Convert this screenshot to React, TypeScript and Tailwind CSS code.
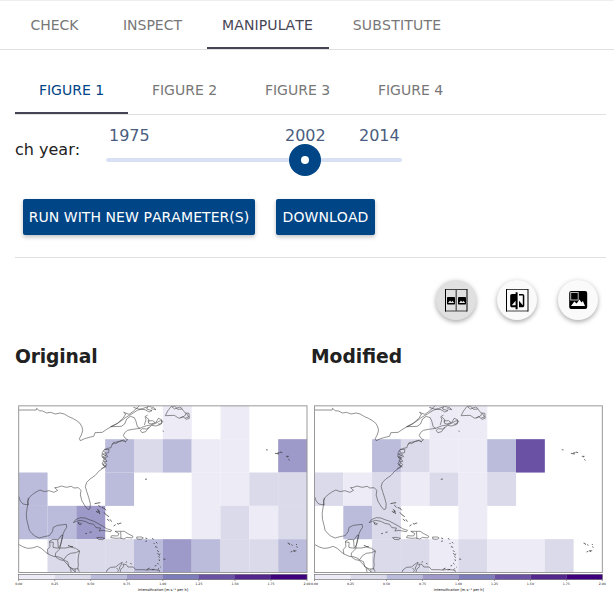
import React from "react";

const SHADES = ["#ffffff", "#edebf6", "#dadaea", "#bbbcdc", "#9d99c8", "#7f7cba", "#6a51a3", "#54278f", "#3f007d"];

const ORIGINAL = [
  [0, 0, 0, 0, 0, 1, 0, 1, 0, 0],
  [0, 0, 0, 3, 2, 3, 1, 1, 0, 4],
  [3, 0, 0, 3, 0, 0, 1, 1, 2, 2],
  [3, 3, 4, 0, 0, 0, 1, 2, 1, 2],
  [0, 2, 2, 2, 3, 4, 3, 2, 2, 3],
];

const MODIFIED = [
  [0, 0, 0, 0, 1, 1, 0, 0, 0, 0],
  [0, 0, 3, 2, 1, 1, 3, 6, 0, 0],
  [2, 1, 2, 1, 2, 1, 2, 0, 0, 0],
  [0, 3, 2, 0, 0, 1, 0, 0, 0, 0],
  [0, 0, 2, 2, 1, 2, 1, 1, 2, 0],
];

const COAST = [
  // Great Lakes border and St Lawrence
  "M26 36H79L80 31L88 38L98 39L110 45L122 43L136 48L150 45L163 48L176 56L188 61L200 68L210 76L216 87L218 98L214 111L208 122L211 128L224 122L238 118L251 115L255 104L277 103L290 94L302 87L318 79L333 69L346 59L365 48L382 37L400 31L414 26",
  "M302 86L334 85L344 78L350 63L361 55L373 59L378 70L382 86L390 91",
  "M302 86L322 76L340 60L347 48L341 43L357 49L371 39L384 27L389 23",
  // Atlantic seaboard and Florida
  "M390 91L368 94L353 97L344 104L340 113L347 122L353 125L346 131L341 126L329 130L316 133L306 140L303 149L293 151L282 156L277 164L276 175L283 185L276 198L286 203L277 212L266 220L256 232L240 243L230 253L226 266L230 280L236 298L241 317L240 332L234 335L225 324L216 309L211 291L213 277L205 269L192 270L184 265L169 268L154 264L143 268L134 269L143 277L132 283L117 278L103 281L90 276L78 282L68 289L58 298L53 309L55 321",
  "M282 154L297 154L296 164L287 166L293 176L283 179L291 190L282 191L290 199L284 209L274 211M280 158L286 164L278 169L288 172L277 177L286 181L279 188M284 194L279 202L290 207",
  "M306 139L311 133L317 137L329 130L338 128L348 132",
  // Maritime provinces and Newfoundland
  "M390 91L398 87L410 83L423 81L437 76L451 68L459 70L450 80L437 84L425 82L415 91L407 101L396 104L391 97L397 92L410 93L418 87M408 57L417 65L415 75L423 78L436 74L428 68L413 69M403 81L408 65L405 56L413 51M437 75L445 61L455 65L454 78L444 78",
  "M370 28L386 33L405 35L417 42L426 38L410 33L414 25L430 28L438 35L423 32",
  "M466 53L473 39L483 26L494 24L503 34L516 33L526 45L537 46L538 61L529 64L519 56L507 61L499 56L493 52L466 53M486 27L494 33L509 27L517 32M511 60L524 54L529 45M530 47L536 57L526 60",
  // Gulf of Mexico, Yucatan and Central America
  "M26 295L31 309L39 318L55 321M55 300L53 320L51 333L49 347L50 364L54 380L58 397L66 407L76 415L88 420L102 416L118 413L127 401L130 388L143 382L169 379L170 388L163 399L157 414L153 434L150 450L167 450L181 447L197 451L209 459L206 470L204 486L205 502L203 511L208 521",
  "M26 439L38 446L53 451L67 450L82 445L94 451L104 460L114 468L130 475L143 476L158 482L163 490L171 498L180 508L189 516L197 523M114 468L112 455L120 446L119 429L129 424L143 425L145 450L150 452L137 465L136 475M144 426L154 412L159 412L153 437L147 450M137 477L149 485L160 487L170 473L181 466L197 464L208 459M163 487L173 491L177 507L191 513L205 512M181 511L184 523M195 513L196 523M119 432L130 433L129 448L144 451",
  // Caribbean islands
  "M190 374L197 365L211 359L225 360L237 365L250 369L265 377L279 385L290 392L305 397L302 401L278 397L267 399L272 390L258 389L251 379L237 376L225 370L210 367L199 370Z",
  "M206 374L215 377L211 381L206 378ZM260 419L271 418L284 421L278 425L265 424ZM315 400L330 400L343 400L354 407L369 415L366 420L350 418L342 423L330 420L319 421L302 419L305 413L323 414L327 407ZM332 401L333 422M380 417L395 417L400 420L393 424L381 423Z",
  "M289 523L291 516L302 508L317 507L331 496L337 493L332 503L328 510L332 518L330 523M332 514L341 506L339 498L349 500L354 507L370 507L377 515L398 515L412 516L425 514L448 517L448 523M320 510L326 517L322 523",
];

const SPECKS = [
  "M254 317L264 315L271 314M265 321L272 328M261 334L268 339L263 345M266 338L269 348M281 329L288 337M282 343L289 351M289 351L297 356M291 363L298 369M300 364L305 371M326 377L334 375M311 384L317 380M321 376L326 379M258 340L264 343M276 327L280 332",
  "M226 407L231 406M239 403L245 402M174 443L179 443M179 445L189 446M203 373L207 376",
  "M406 420L412 422M406 430L411 429M426 421L431 424M431 435L434 438M438 432L442 436M435 446L442 448M442 457L446 462M442 466L447 470M446 475L449 479M447 484L449 489M442 495L446 499M434 504L439 502M443 515L447 511M410 515L419 510M425 516L433 514M347 493L351 491M361 496L365 498M450 470L447 472",
  "M405 244L411 243M458 99L461 100M768 155L773 156M795 166L807 168M802 165L809 164M810 162L817 164M828 175L836 175M833 176L833 178M835 184L839 187",
  "M833 435L839 437M837 438L840 440M844 440L848 442M858 438L861 441M859 446L863 448M842 462L847 460M849 459L855 458M853 458L855 462M856 458L859 458M460 483L466 484M451 507L453 508M451 467L449 468",
];

const TICKS = ["0.00", "0.25", "0.50", "0.75", "1.00", "1.25", "1.50", "1.75", "2.00"];

// The map frame runs from x=left to x=right in viewBox units.
function Plot({ data, left, right }: { data: number[][]; left: number; right: number }) {
  const width = right - left;
  const cell = width / 10;
  const step = width / 8;
  return (
    <svg viewBox="15 0 888 600" className="block h-[200px] w-[296px] shrink-0 overflow-visible">
      {data.map((row, r) =>
        row.map((v, c) =>
          v ? <rect key={`${r}-${c}`} x={left + c * cell} y={23.5 + r * 100} width={cell + 0.2} height={100.2} fill={SHADES[v]} /> : null,
        ),
      )}
      <g transform={`translate(${left - 26} 0)`} fill="none" stroke="#333" strokeWidth="1.6" strokeLinejoin="round">
        {COAST.map((d) => <path key={d} d={d} />)}
      </g>
      <g transform={`translate(${left - 26} 0)`} fill="none" stroke="#333" strokeWidth="2.2">
        {SPECKS.map((d) => <path key={d} d={d} />)}
      </g>
      <rect x={left} y="23.5" width={width} height="500" fill="none" stroke="#999" strokeWidth="3" />
      {SHADES.slice(1).map((s, i) => (
        <rect key={s} x={left + i * step} y="529" width={step + 0.3} height="16" fill={s} />
      ))}
      <rect x={left} y="529" width={width} height="16" fill="none" stroke="#666" strokeWidth="1.8" />
      {TICKS.map((t, i) => (
        <g key={t}>
          <path d={`M${left + i * step} 545v4`} stroke="#333" strokeWidth="1.5" />
          <text x={left + i * step} y="560" textAnchor="middle" fontSize="9.5" fill="#111">{t}</text>
        </g>
      ))}
      <text x={left + 358} y="579" fontSize="10.8" fill="#000">
        Intensification [m s<tspan dy="-4" fontSize="7.5">−1</tspan><tspan dy="4"> per h]</tspan>
      </text>
    </svg>
  );
}

function SideBySideIcon() {
  return (
    <svg viewBox="0 0 24 24" className="size-6">
      <path d="M1 1.5h22M1 23h22" stroke="#444" fill="none" />
      <path d="M1.5 1v22.5M23 1v22.5" stroke="#000" fill="none" />
      <path d="M12.2 1v22" stroke="#444" strokeWidth="1.2" />
      <rect x="3" y="9" width="8" height="7.5" rx="0.8" />
      <rect x="14" y="9" width="8" height="7.5" rx="0.8" />
      <path d="M4 15l2-2.5 1.4 1.5 1-1.3 1.8 2.3zM15 15l2-2.5 1.4 1.5 1-1.3 1.8 2.3z" fill="#e0e0e0" />
    </svg>
  );
}

function CompareIcon() {
  return (
    <svg viewBox="0 0 24 24" className="size-6">
      <path d="M1 1.5h22M1 23h22" stroke="#444" fill="none" />
      <path d="M1.5 1v22.5M23 1v22.5" stroke="#000" fill="none" />
      <path d="M10.6 6H7c-1 0-1.8.8-1.8 1.8v9.7c0 1 .8 1.8 1.8 1.8h3.6v1.9h2V4.2h-2zM10.6 17.2H6.8l3.8-4.4zM14 6v1.5h3.8v9.7L14 12.8v6.5h3.5c1 0 1.8-.8 1.8-1.8V7.8c0-1-.8-1.8-1.8-1.8z" />
    </svg>
  );
}

function OverlayIcon() {
  return (
    <svg viewBox="0 0 24 24" className="size-6">
      <rect x="3.2" y="3" width="18" height="18" rx="2" />
      <rect x="4.7" y="4.5" width="7.5" height="7.5" fill="#000" stroke="#bbb" />
      <path d="M5 18l3.3-4.5 2.3 2 3-4 1.8 3 1.5-1.5L19 18z" fill="#fafafa" />
    </svg>
  );
}

function Tab({ label, className }: { label: string; className: string }) {
  return <button className={`flex shrink-0 items-center justify-center text-sm whitespace-nowrap ${className}`}>{label}</button>;
}

const FAB = "flex size-10 items-center justify-center rounded-full shadow-[0_2px_4px_rgba(0,0,0,0.24),0_1px_6px_rgba(0,0,0,0.12)]";
const BUTTON = "flex h-9 items-center justify-center rounded-[2px] bg-[#004586] text-sm tracking-[0.06px] text-white whitespace-nowrap shadow-[0_2px_4px_rgba(0,0,0,0.25)]";

export default function App() {
  return (
    <div className="h-[598px] w-[614px] overflow-hidden border-t border-[#eee] bg-white font-['DejaVu_Sans',sans-serif] text-[#212121] [font-kerning:none]">
      <nav className="flex h-[49px] border-b border-[#e0e0e0] pl-[7px]">
        <Tab label="CHECK" className="w-[95px] text-[#777]" />
        <Tab label="INSPECT" className="w-[105px] pr-[4px] text-[#777]" />
        <Tab label="MANIPULATE" className="w-[122px] border-b-2 border-[#464555] pt-0.5 pr-px tracking-[0.12px] text-[#464555]" />
        <Tab label="SUBSTITUTE" className="w-[136px] tracking-[0.22px] text-[#777]" />
      </nav>
      <main className="pr-2 pl-[15px]">
        <nav className="mt-4 flex h-[49px] border-b border-[#e0e0e0]">
          <Tab label="FIGURE 1" className="w-[113px] border-b-2 border-[#464555] pt-0.5 text-[#004586]" />
          <Tab label="FIGURE 2" className="w-[113px] text-[#777]" />
          <Tab label="FIGURE 3" className="w-[113px] text-[#777]" />
          <Tab label="FIGURE 4" className="w-[113px] text-[#777]" />
        </nav>
        <div className="flex h-[84px] pt-2.5">
          <span className="mt-[13px] w-[91px] shrink-0">ch year:</span>
          <div className="w-[296px]">
            <div className="flex text-[#4b5d80]">
              <span className="w-[176px] pl-[3px] leading-[22px]">1975</span>
              <span className="w-[74px] pl-[3px] leading-[22px]">2002</span>
              <span className="pl-[3px] leading-[22px]">2014</span>
            </div>
            <div className="relative mt-[11px] h-1 rounded-sm bg-[#d8e1f3]">
              <span className="absolute -top-3.5 left-[183px] flex size-8 items-center justify-center rounded-full bg-[#004586]">
                <span className="size-2 rounded-full bg-white" />
              </span>
            </div>
          </div>
        </div>
        <div className="flex h-[59px] gap-[21px] border-b border-[#e0e0e0] pl-2">
          <button className={`w-[232px] ${BUTTON}`}>RUN WITH NEW PARAMETER(S)</button>
          <button className={`w-[99px] ${BUTTON}`}>DOWNLOAD</button>
        </div>
        <div className="flex h-[86px] justify-end gap-[21px] pt-[22px] pr-2">
          <button className={`bg-[#e0e0e0] ${FAB}`}><SideBySideIcon /></button>
          <button className={`bg-[#fafafa] ${FAB}`}><CompareIcon /></button>
          <button className={`bg-[#fafafa] ${FAB}`}><OverlayIcon /></button>
        </div>
        <div className="flex">
          <section className="w-[296px] shrink-0">
            <h3 className="h-[54px] pt-px text-[18.72px] leading-6 font-bold tracking-[-0.15px]">Original</h3>
            <Plot data={ORIGINAL} left={26} right={891} />
          </section>
          <section className="w-[296px] shrink-0">
            <h3 className="h-[54px] pt-px text-[18.72px] leading-6 font-bold">Modified</h3>
            <Plot data={MODIFIED} left={25.5} right={889} />
          </section>
        </div>
      </main>
    </div>
  );
}
